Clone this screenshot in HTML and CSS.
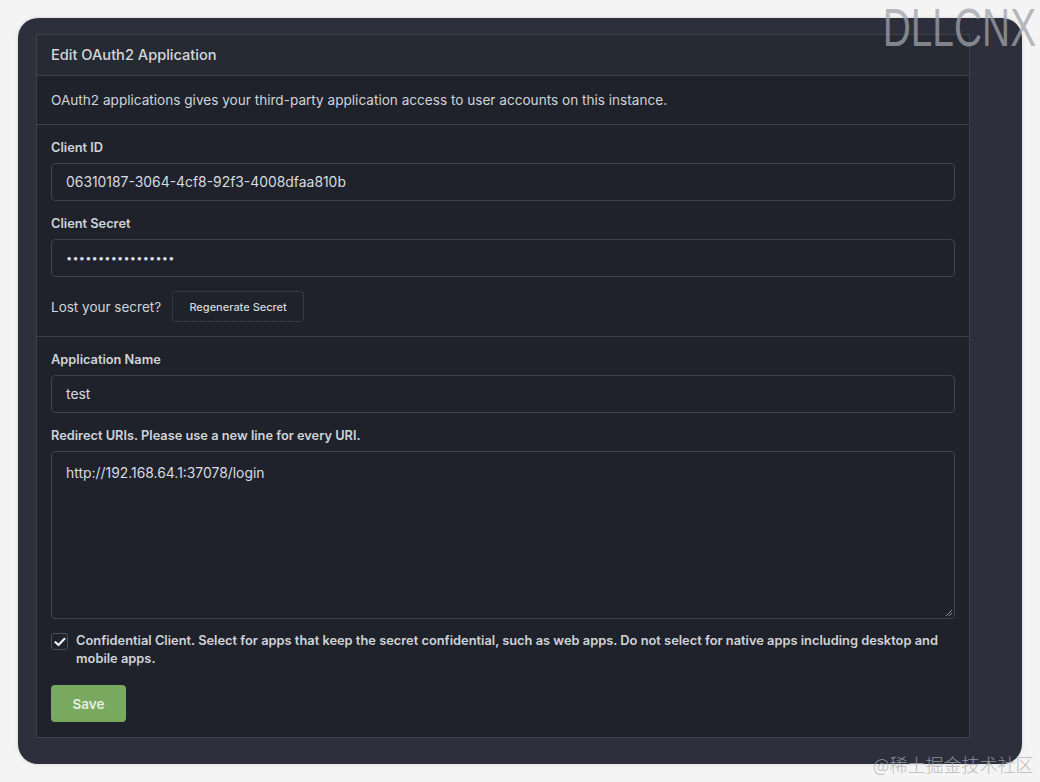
FILE: index.html
```html
<!DOCTYPE html>
<html lang="en">
<head>
<meta charset="utf-8">
<title>Edit OAuth2 Application</title>
<link rel="stylesheet" href="styles.css">
</head>
<body>
<div class="window">
  <div class="card">
    <div class="card-header">Edit OAuth2 Application</div>
    <div class="card-desc">OAuth2 applications gives your third-party application access to user accounts on this instance.</div>
    <div class="section">
      <label class="label">Client ID</label>
      <div class="input">06310187-3064-4cf8-92f3-4008dfaa810b</div>
      <label class="label gap">Client Secret</label>
      <div class="input secret">•••••••••••••••••</div>
      <div class="lost-row">
        <span class="lost">Lost your secret?</span>
        <button class="btn-basic">Regenerate Secret</button>
      </div>
    </div>
    <div class="section last">
      <label class="label">Application Name</label>
      <div class="input">test</div>
      <label class="label gap">Redirect URIs. Please use a new line for every URI.</label>
      <div class="textarea">http://192.168.64.1:37078/login<svg class="grip" width="8" height="8" viewBox="0 0 8 8"><path d="M7 1 L1 7 M7 4 L4 7" stroke="#8a8f98" stroke-width="1"/></svg></div>
      <div class="check-row">
        <span class="checkbox"><svg width="12" height="10" viewBox="0 0 12 10"><path d="M1.5 5.2 L4.5 8 L10.5 1.8" fill="none" stroke="#f2f3f5" stroke-width="2.2" stroke-linecap="round" stroke-linejoin="round"/></svg></span>
        <span class="check-text">Confidential Client. Select for apps that keep the secret confidential, such as web apps. Do not select for native apps including desktop and mobile apps.</span>
      </div>
      <button class="btn-save">Save</button>
    </div>
  </div>
</div>
<div class="wm-top">DLLCNX</div>
<div class="wm-bottom">@稀土掘金技术社区</div>
</body>
</html>
```
FILE: styles.css
```css
html, body {
  margin: 0;
  padding: 0;
}
body {
  background: #f4f4f4;
  padding: 18px;
  font-family: Inter, "Noto Sans", sans-serif;
  color: #d3d6db;
  position: relative;
  height: 782px;
  box-sizing: border-box;
  overflow: hidden;
}
.window {
  width: 1004px;
  height: 746px;
  box-sizing: border-box;
  background: #2d303c;
  border-radius: 20px;
  padding: 16px 52px 26px 18px;
  box-shadow: 0 0 4px rgba(0,0,0,0.12);
}
.card {
  border: 1px solid #3d414a;
  background: #1f222a;
  display: flex;
  flex-direction: column;
}
.card-header {
  background: #262a33;
  height: 40px;
  line-height: 40px;
  padding: 0 14px;
  font-size: 14.6px;
  font-weight: 500;
  color: #d4d7dc;
  border-bottom: 1px solid #3d414a;
}
.card-desc {
  height: 48px;
  line-height: 48px;
  padding: 0 14px;
  font-size: 13.6px;
  border-bottom: 1px solid #3d414a;
  color: #d0d3d8;
}
.section {
  padding: 14px 14px 14px;
  display: flex;
  flex-direction: column;
  border-bottom: 1px solid #3d414a;
}
.section.last {
  border-bottom: none;
  padding-bottom: 15px;
}
.label {
  font-size: 12.8px;
  font-weight: 600;
  line-height: 18px;
  color: #d0d3d8;
  margin-bottom: 6px;
}
.label.gap {
  margin-top: 14px;
  margin-bottom: 6px;
}
.input {
  height: 38px;
  box-sizing: border-box;
  border: 1px solid #3e434c;
  border-radius: 4px;
  padding: 0 14px;
  line-height: 36px;
  font-size: 13.9px;
  color: #d8dbe0;
}
.input.secret {
  letter-spacing: 0.2px;
  font-size: 11px;
}
.lost-row {
  display: flex;
  align-items: center;
  gap: 11px;
  margin-top: 14px;
}
.lost {
  font-size: 13.5px;
  color: #d0d3d8;
}
.btn-basic {
  height: 31px;
  width: 132px;
  background: transparent;
  border: 1px dotted #4a4f58;
  border-radius: 4px;
  color: #d4d7dc;
  font-family: inherit;
  font-size: 11px;
  font-weight: 500;
  padding: 0;
}
.textarea {
  position: relative;
  height: 168px;
  box-sizing: border-box;
  border: 1px solid #3e434c;
  border-radius: 4px;
  padding: 11px 14px;
  font-size: 13.9px;
  line-height: 20px;
  color: #d8dbe0;
}
.grip {
  position: absolute;
  right: 1px;
  bottom: 1px;
}
.check-row {
  display: flex;
  align-items: flex-start;
  gap: 8px;
  margin-top: 13px;
}
.checkbox {
  flex: none;
  width: 15px;
  height: 15px;
  margin-top: 1px;
  border: 1px solid #4a4f58;
  border-radius: 3px;
  display: flex;
  align-items: center;
  justify-content: center;
}
.check-text {
  font-size: 12.85px;
  font-weight: 600;
  line-height: 18px;
  color: #d0d3d8;
}
.btn-save {
  margin-top: 17px;
  align-self: flex-start;
  width: 75px;
  height: 37px;
  border: none;
  border-radius: 4px;
  background: #79a95e;
  color: #e6eee0;
  font-family: inherit;
  font-size: 13.5px;
  font-weight: 600;
  padding: 0;
}
.wm-top {
  position: absolute;
  right: 4px;
  top: 0;
  font-family: "Liberation Sans", sans-serif;
  font-size: 54px;
  line-height: 54px;
  color: rgba(160, 163, 170, 0.75);
  transform: scaleX(0.72);
  transform-origin: right top;
}
.wm-bottom {
  position: absolute;
  left: 873px;
  top: 752px;
  font-family: "Noto Sans CJK SC", sans-serif;
  font-weight: 300;
  font-size: 18px;
  line-height: 24px;
  color: rgba(170, 172, 178, 0.8);
}
```
